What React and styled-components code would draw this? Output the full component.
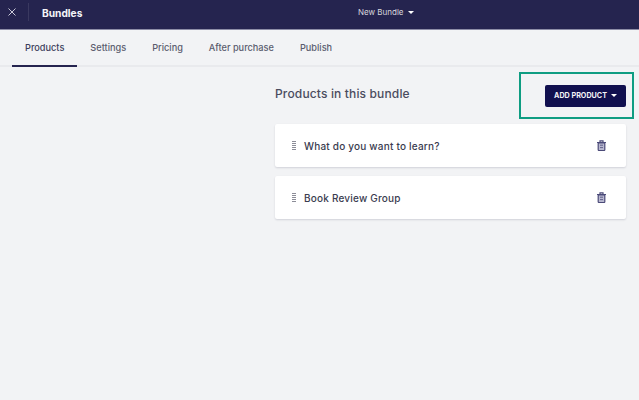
import styled, { createGlobalStyle } from 'styled-components';

const GlobalStyle = createGlobalStyle`
  html, body {
    margin: 0;
    padding: 0;
    background: #f2f3f5;
  }
  * {
    box-sizing: border-box;
  }
`;

const Page = styled.div`
  width: 639px;
  height: 400px;
  overflow: hidden;
  background: #f2f3f5;
  font-family: Inter, 'Liberation Sans', sans-serif;
  color: #363a50;
`;

const TopBar = styled.header`
  height: 30px;
  padding-bottom: 5px;
  background: #25244f;
  border-bottom: 1px solid #8d8da6;
  display: grid;
  grid-template-columns: 358px auto 1fr;
  align-items: center;
  color: #fff;
`;

const TopLeft = styled.div`
  display: flex;
  align-items: center;
`;

const CloseButton = styled.span`
  width: 29px;
  height: 18px;
  padding-left: 8px;
  display: flex;
  align-items: center;
  border-right: 1px solid #3a3960;
  color: #c9c9d8;
`;

const Title = styled.h1`
  margin: 2px 0 0 13px;
  font-size: 10.2px;
  font-weight: 700;
  line-height: 1;
  color: #f4f4f8;
`;

const BundleMenu = styled.div`
  display: flex;
  align-items: center;
  gap: 4px;
  font-size: 8px;
  color: #d8d8de;
`;

const Caret = styled.span`
  width: 0;
  height: 0;
  border-left: 3px solid transparent;
  border-right: 3px solid transparent;
  border-top: 3px solid ${(props) => props.color};
`;

const Tabs = styled.nav`
  height: 37px;
  display: flex;
  padding-left: 12px;
  border-bottom: 2px solid #e9eaed;
`;

const Tab = styled.a`
  height: 37px;
  padding: 0 13px 1px;
  display: flex;
  align-items: center;
  font-size: 9.2px;
  font-weight: 500;
  color: ${(props) => (props.$active ? '#3d3f5c' : '#5a5c6e')};
  border-bottom: 2px solid ${(props) => (props.$active ? '#25244f' : 'transparent')};
`;

const Content = styled.main`
  width: 351px;
  margin-left: 275px;
`;

const Heading = styled.div`
  height: 57px;
  padding-top: 5px;
  display: flex;
  align-items: flex-start;
  justify-content: space-between;
`;

const HeadingText = styled.h2`
  margin: 14px 0 0;
  font-size: 12px;
  font-weight: 500;
  line-height: 15px;
  letter-spacing: 0.15px;
  color: #4a4c5e;
`;

const Highlight = styled.div`
  width: 115px;
  height: 47px;
  margin-right: -8px;
  border: 2px solid #0f9d82;
  display: flex;
  align-items: center;
  justify-content: flex-end;
  padding-right: 6px;
`;

const AddButton = styled.button`
  width: 81px;
  height: 22px;
  padding: 0;
  border: 0;
  border-radius: 2px;
  background: #11104f;
  color: #f4f4f8;
  font-family: inherit;
  font-size: 7.2px;
  font-weight: 700;
  display: flex;
  align-items: center;
  justify-content: center;
  gap: 4px;
`;

const List = styled.div`
  display: flex;
  flex-direction: column;
  gap: 9px;
`;

const Card = styled.div`
  height: 43px;
  background: #fff;
  border-radius: 2px;
  box-shadow: 0 1px 2px rgba(40, 40, 70, 0.16);
  display: flex;
  align-items: center;
  padding: 0 20px 0 17px;
`;

const CardTitle = styled.span`
  flex: 1;
  margin-left: 8px;
  font-size: 10px;
  font-weight: 500;
  letter-spacing: 0.2px;
  color: #3a3c50;
`;

const DragHandle = () => (
  <svg width="4" height="9" viewBox="0 0 4 9">
    <path d="M0 .5h4M0 2.5h4M0 4.5h4M0 6.5h4M0 8.5h4" stroke="#8c8d98" strokeWidth="1" />
  </svg>
);

const TrashIcon = () => (
  <svg width="9" height="11" viewBox="0 0 9 11" fill="none">
    <path d="M0 2.5h9M3 2.5V.8h3v1.7" stroke="#4b4a78" strokeWidth="1.2" />
    <path d="M1.2 3h6.6v6.7a.8.8 0 0 1-.8.8H2a.8.8 0 0 1-.8-.8z" stroke="#4b4a78" strokeWidth="1.2" fill="#b9b9d0" />
    <path d="M3 5.2h3M3 7.6h3" stroke="#4b4a78" strokeWidth=".8" />
  </svg>
);

const tabs = [
  { label: 'Products', active: true },
  { label: 'Settings' },
  { label: 'Pricing' },
  { label: 'After purchase' },
  { label: 'Publish' },
];

const products = ['What do you want to learn?', 'Book Review Group'];

export default function App() {
  return (
    <Page>
      <GlobalStyle />
      <TopBar>
        <TopLeft>
          <CloseButton>
            <svg width="8" height="8" viewBox="0 0 8 8">
              <path d="M.5.5l7 7M7.5.5l-7 7" stroke="currentColor" strokeWidth="1" />
            </svg>
          </CloseButton>
          <Title>Bundles</Title>
        </TopLeft>
        <BundleMenu>
          New Bundle
          <Caret color="#fff" />
        </BundleMenu>
        <span />
      </TopBar>
      <Tabs>
        {tabs.map((tab) => (
          <Tab key={tab.label} $active={tab.active}>
            {tab.label}
          </Tab>
        ))}
      </Tabs>
      <Content>
        <Heading>
          <HeadingText>Products in this bundle</HeadingText>
          <Highlight>
            <AddButton>
              ADD PRODUCT
              <Caret color="#fff" />
            </AddButton>
          </Highlight>
        </Heading>
        <List>
          {products.map((name) => (
            <Card key={name}>
              <DragHandle />
              <CardTitle>{name}</CardTitle>
              <TrashIcon />
            </Card>
          ))}
        </List>
      </Content>
    </Page>
  );
}
